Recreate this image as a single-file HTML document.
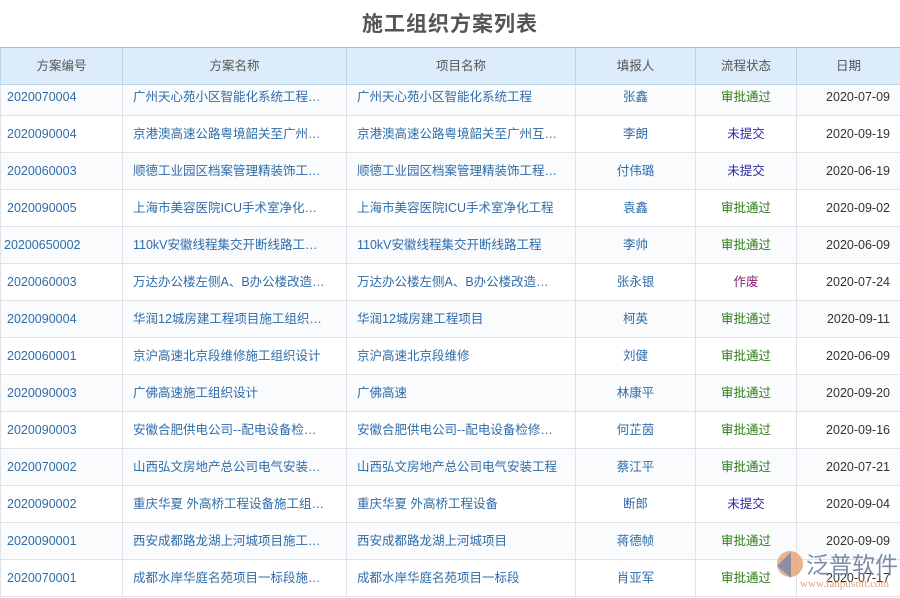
<!DOCTYPE html><html><head><meta charset="utf-8"><style>
body{margin:0;width:900px;height:598px;overflow:hidden;background:#fff;font-family:"Liberation Sans","Noto Sans CJK SC",sans-serif;position:relative}
h1{margin:0;position:absolute;top:8px;left:0;width:900px;text-align:center;font-size:21px;color:#555;font-weight:bold;letter-spacing:1px}
table{position:absolute;top:47px;left:0;border-collapse:collapse;table-layout:fixed;width:900px;font-size:12.5px}
td,th{height:36px;line-height:36px;border:1px solid #dfe3e8;padding:0;white-space:nowrap;overflow:hidden;vertical-align:middle}
th{background:#dcecfa;color:#555;font-weight:normal;border-color:#b9d3ea;border-top:1px solid #9cc0e0}
tr.r1 td{height:24px;line-height:24px;padding-bottom:6px}
td{color:#2f6ca8}
td:nth-child(1){text-align:left;padding-left:6px}
td:nth-child(2),td:nth-child(3){padding-left:10px}
td:nth-child(4),td:nth-child(5){text-align:center}
td:nth-child(6){text-align:right;padding-right:10px;color:#333}
tr:nth-child(even) td{background:#fafbfd}
.g{color:#2d7d16!important}.b{color:#2a2aa0!important}.p{color:#8a2070!important}
.logo{position:absolute;left:770px;top:546px;width:128px;height:50px}
</style></head><body>
<h1>施工组织方案列表</h1>
<table>
<colgroup><col style="width:122px"><col style="width:224px"><col style="width:229px"><col style="width:120px"><col style="width:101px"><col style="width:104px"></colgroup>
<tr><th>方案编号</th><th>方案名称</th><th>项目名称</th><th>填报人</th><th>流程状态</th><th>日期</th></tr>
<tr class="r1"><td>2020070004</td><td>广州天心苑小区智能化系统工程…</td><td>广州天心苑小区智能化系统工程</td><td>张鑫</td><td class="g">审批通过</td><td>2020-07-09</td></tr>
<tr><td>2020090004</td><td>京港澳高速公路粤境韶关至广州…</td><td>京港澳高速公路粤境韶关至广州互…</td><td>李朗</td><td class="b">未提交</td><td>2020-09-19</td></tr>
<tr><td>2020060003</td><td>顺德工业园区档案管理精装饰工…</td><td>顺德工业园区档案管理精装饰工程…</td><td>付伟璐</td><td class="b">未提交</td><td>2020-06-19</td></tr>
<tr><td>2020090005</td><td>上海市美容医院ICU手术室净化…</td><td>上海市美容医院ICU手术室净化工程</td><td>袁鑫</td><td class="g">审批通过</td><td>2020-09-02</td></tr>
<tr><td style="padding-left:3px">20200650002</td><td>110kV安徽线程集交开断线路工…</td><td>110kV安徽线程集交开断线路工程</td><td>李帅</td><td class="g">审批通过</td><td>2020-06-09</td></tr>
<tr><td>2020060003</td><td>万达办公楼左侧A、B办公楼改造…</td><td>万达办公楼左侧A、B办公楼改造…</td><td>张永银</td><td class="p">作废</td><td>2020-07-24</td></tr>
<tr><td>2020090004</td><td>华润12城房建工程项目施工组织…</td><td>华润12城房建工程项目</td><td>柯英</td><td class="g">审批通过</td><td>2020-09-11</td></tr>
<tr><td>2020060001</td><td>京沪高速北京段维修施工组织设计</td><td>京沪高速北京段维修</td><td>刘健</td><td class="g">审批通过</td><td>2020-06-09</td></tr>
<tr><td>2020090003</td><td>广佛高速施工组织设计</td><td>广佛高速</td><td>林康平</td><td class="g">审批通过</td><td>2020-09-20</td></tr>
<tr><td>2020090003</td><td>安徽合肥供电公司--配电设备检…</td><td>安徽合肥供电公司--配电设备检修…</td><td>何芷茵</td><td class="g">审批通过</td><td>2020-09-16</td></tr>
<tr><td>2020070002</td><td>山西弘文房地产总公司电气安装…</td><td>山西弘文房地产总公司电气安装工程</td><td>蔡江平</td><td class="g">审批通过</td><td>2020-07-21</td></tr>
<tr><td>2020090002</td><td>重庆华夏 外高桥工程设备施工组…</td><td>重庆华夏 外高桥工程设备</td><td>断郎</td><td class="b">未提交</td><td>2020-09-04</td></tr>
<tr><td>2020090001</td><td>西安成都路龙湖上河城项目施工…</td><td>西安成都路龙湖上河城项目</td><td>蒋德帧</td><td class="g">审批通过</td><td>2020-09-09</td></tr>
<tr><td>2020070001</td><td>成都水岸华庭名苑项目一标段施…</td><td>成都水岸华庭名苑项目一标段</td><td>肖亚军</td><td class="g">审批通过</td><td>2020-07-17</td></tr>
</table>
<svg class="logo" viewBox="0 0 128 50"><circle cx="20" cy="18" r="13" fill="#e9a37a" opacity=".85"/><path d="M7 20 L21 6 L21 32 Z" fill="#7a8aa8" opacity=".85"/><text x="36" y="27" font-size="23" fill="#7d8ba8" font-family="Noto Sans CJK SC,sans-serif">泛普软件</text><text x="30" y="41" font-size="11" fill="#d9a07a" font-family="Liberation Serif,serif">www.fanpusoft.com</text></svg>
</body></html>
